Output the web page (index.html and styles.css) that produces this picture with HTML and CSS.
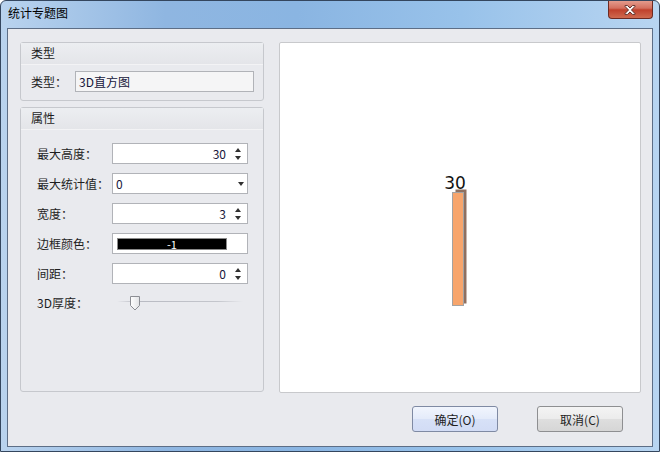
FILE: index.html
```html
<!DOCTYPE html>
<html lang="zh-CN">
<head>
    <meta charset="UTF-8">
    <title>统计专题图</title>
    <link rel="stylesheet" href="styles.css">
</head>
<body>

<div class="window">
    <!-- заголовок окна -->
    <div class="titlebar">
        <span class="title">统计专题图</span>
        <span class="close">
            <svg width="45" height="19" viewBox="0 0 45 19">
                <path d="M17.5 5.5 L20 5.5 L22.5 8 L25 5.5 L27.5 5.5 L27.5 6.5 L24 10 L27.5 13.5 L27.5 14.5 L25 14.5 L22.5 12 L20 14.5 L17.5 14.5 L17.5 13.5 L21 10 L17.5 6.5 Z"
                      fill="#fff" stroke="#5a2a24" stroke-width="1"/>
            </svg>
        </span>
    </div>

    <div class="client">
        <div class="content">
            <div class="left">
                <div class="group group-type">
                    <div class="group-head">类型</div>
                    <div class="group-body">
                        <label>类型：</label>
                        <div class="field readonly">3D直方图</div>
                    </div>
                </div>

                <div class="group group-props">
                    <div class="group-head">属性</div>
                    <div class="rows">
                        <div class="row">
                            <label>最大高度：</label>
                            <div class="field spin"><span class="val">30</span><span class="arrows"><i class="up"></i><i class="down"></i></span></div>
                        </div>
                        <div class="row">
                            <label>最大统计值：</label>
                            <div class="field combo"><span class="val">0</span><i class="down"></i></div>
                        </div>
                        <div class="row">
                            <label>宽度：</label>
                            <div class="field spin"><span class="val">3</span><span class="arrows"><i class="up"></i><i class="down"></i></span></div>
                        </div>
                        <div class="row">
                            <label>边框颜色：</label>
                            <div class="field color"><span class="swatch">-1</span></div>
                        </div>
                        <div class="row">
                            <label>间距：</label>
                            <div class="field spin"><span class="val">0</span><span class="arrows"><i class="up"></i><i class="down"></i></span></div>
                        </div>
                        <div class="row slider-row">
                            <label>3D厚度：</label>
                            <div class="slider">
                                <span class="track"></span>
                                <svg class="thumb" width="12" height="16" viewBox="0 0 12 16">
                                    <defs>
                                        <linearGradient id="tg" x1="0" y1="0" x2="1" y2="0">
                                            <stop offset="0" stop-color="#ffffff"/>
                                            <stop offset="1" stop-color="#e2e3e6"/>
                                        </linearGradient>
                                    </defs>
                                    <path d="M1.5 1.5 H10.5 V10.5 L6 15 L1.5 10.5 Z" fill="url(#tg)" stroke="#8c8e94"/>
                                </svg>
                            </div>
                        </div>
                    </div>
                </div>
            </div>

            <!-- предпросмотр диаграммы -->
            <div class="preview">
                <svg width="360" height="349" viewBox="0 0 360 349">
                    <rect x="175.5" y="146.5" width="11" height="114" fill="#8f7060"/>
                    <rect x="172.5" y="149.5" width="11" height="113" fill="#f7a56c" stroke="#a3a3a3"/>
                    <text x="175" y="146" text-anchor="middle" class="bar-label">30</text>
                </svg>
            </div>
        </div>

        <div class="footer">
            <button class="btn default">确定(O)</button>
            <button class="btn">取消(C)</button>
        </div>
    </div>
</div>

</body>
</html>
```

FILE: styles.css
```css
body {
    margin: 0;
    font-family: "Noto Sans CJK SC", "Liberation Sans", sans-serif;
    font-size: 12px;
    color: #1e1e1e;
}
.window {
    width: 660px;
    height: 452px;
    box-sizing: border-box;
    border: 1px solid #34465e;
    border-radius: 6px 6px 0 0;
    background: linear-gradient(to right, #b9d3ee 0%, #8fb6e1 25%, #8ab5e2 45%, #98c2ea 70%, #b8d5f1 100%);
    display: flex;
    flex-direction: column;
    overflow: hidden;
}
.titlebar {
    height: 27px;
    display: flex;
    justify-content: space-between;
    align-items: flex-start;
    padding-left: 7px;
    padding-right: 6px;
}
.title {
    line-height: 24px;
    color: #000;
}
.close {
    width: 45px;
    height: 19px;
    margin-top: -1px;
    box-sizing: border-box;
    border: 1px solid #6d2a22;
    border-top: none;
    border-radius: 0 0 4px 4px;
    background: linear-gradient(#e6a193 0%, #d4705f 45%, #c0412c 55%, #cf6a4f 100%);
    display: flex;
}
.close svg {
    margin-left: -1px;
}
.client {
    margin: 0 6px 4px 6px;
    height: 419px;
    box-sizing: border-box;
    border: 1px solid #5d6e86;
    background: #e9eaee;
}
.content {
    display: grid;
    grid-template-columns: 244px 362px;
    column-gap: 15px;
    padding: 13px 11px 0 12px;
}
.left {
    display: flex;
    flex-direction: column;
    gap: 6px;
}
.group {
    border: 1px solid #c6c8cd;
    border-radius: 3px;
    background: #e9eaee;
}
.group-head {
    height: 21px;
    line-height: 20px;
    padding-left: 10px;
    background: linear-gradient(#eceef1, #e4e5e9);
    border-bottom: 1px solid #f3f3f5;
}
.group-type .group-body {
    display: flex;
    align-items: center;
    padding: 6px 9px 8px 10px;
}
.group-type label {
    width: 44px;
}
.field {
    box-sizing: border-box;
    height: 21px;
    border: 1px solid #b1b3b8;
    background: #fff;
    display: flex;
    align-items: center;
    color: #16163a;
}
.field.readonly {
    width: 179px;
    background: #f5f5f6;
    padding-left: 3px;
}
.group-props {
    height: 285px;
    box-sizing: border-box;
}
.rows {
    display: flex;
    flex-direction: column;
    gap: 9px;
    padding: 13px 15px 0 16px;
}
.row {
    display: flex;
    align-items: center;
}
.row label {
    width: 75px;
}
.row .field {
    width: 136px;
}
.spin {
    justify-content: flex-end;
}
.spin .val {
    padding-right: 5px;
}
.arrows {
    width: 14px;
    display: flex;
    flex-direction: column;
    align-items: center;
    gap: 4px;
    margin-right: 2px;
}
.up, .down {
    display: block;
    width: 0;
    height: 0;
    border-left: 3.5px solid transparent;
    border-right: 3.5px solid transparent;
}
.up {
    border-bottom: 4px solid #303030;
}
.down {
    border-top: 4px solid #303030;
}
.combo {
    justify-content: space-between;
    padding-left: 3px;
}
.combo .down {
    margin-right: 3px;
}
.color {
    padding-left: 4px;
}
.swatch {
    width: 110px;
    height: 12px;
    box-sizing: border-box;
    border: 1px solid #8a8a8a;
    background: #000;
    color: #fff;
    font-size: 11px;
    line-height: 10px;
    text-align: center;
}
.slider-row {
    margin-top: 1px;
}
.slider {
    position: relative;
    width: 126px;
    height: 16px;
    margin-left: 5px;
}
.track {
    position: absolute;
    left: 0;
    right: 0;
    top: 6px;
    height: 1px;
    background: linear-gradient(to right, rgba(180,182,190,0), #b8bac2 15%, #c4c6cc 80%, rgba(200,202,208,0));
}
.thumb {
    position: absolute;
    left: 12px;
    top: 0;
}
.preview {
    height: 351px;
    box-sizing: border-box;
    border: 1px solid #c8c9cc;
    border-radius: 2px;
    background: #fff;
}
.preview svg {
    display: block;
}
.bar-label {
    font-family: "DejaVu Sans", sans-serif;
    font-size: 17px;
    fill: #111;
}
.footer {
    display: flex;
    justify-content: flex-end;
    gap: 39px;
    padding: 13px 29px 0 0;
}
.btn {
    width: 86px;
    height: 26px;
    border: 1px solid #8e8f91;
    border-radius: 3px;
    font-family: inherit;
    font-size: 12px;
    color: #1e1e1e;
    background: linear-gradient(#f4f4f4 0%, #ececec 48%, #dedede 52%, #d6d6d6 100%);
    padding: 0;
}
.btn.default {
    border-color: #7f8aa3;
    background: linear-gradient(#f1f5fd 0%, #e4ebfa 48%, #d7e1f7 52%, #d2dcf5 100%);
}
```
